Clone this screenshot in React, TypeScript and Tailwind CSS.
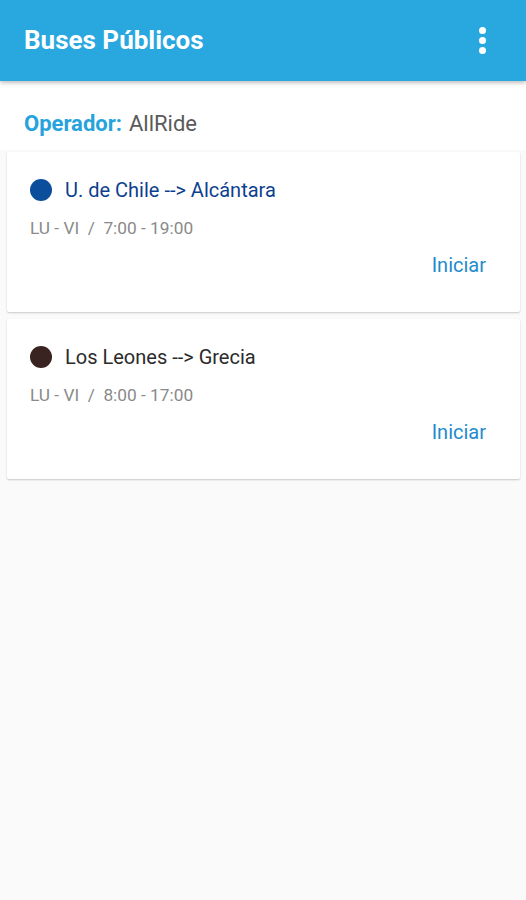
import React from "react";

const routes = [
  { color: "#0b4f9c", name: "U. de Chile --> Alcántara", nameColor: "#0d3f8f", sched: "LU - VI  /  7:00 - 19:00" },
  { color: "#3a2422", name: "Los Leones --> Grecia", nameColor: "#2b2b2b", sched: "LU - VI  /  8:00 - 17:00" },
];

export default function App() {
  return (
    <div className="min-h-[900px] w-[526px] bg-[#fafafa]" style={{ fontFamily: "Roboto, 'Noto Sans', sans-serif" }}>
      <div className="relative z-10 flex h-[81px] items-center justify-between bg-[#29a8e0] pl-6 pr-[40px] shadow-[0_2px_4px_rgba(0,0,0,0.25)]">
        <h1 className="text-[26px] font-bold text-white">Buses Públicos</h1>
        <div className="flex flex-col gap-[3px]">
          <span className="h-[7px] w-[7px] rounded-full bg-white" />
          <span className="h-[7px] w-[7px] rounded-full bg-white" />
          <span className="h-[7px] w-[7px] rounded-full bg-white" />
        </div>
      </div>
      <div className="flex h-[69px] items-center bg-white pl-6 pt-[16px] text-[22px]">
        <span className="font-bold text-[#26a2dc]">Operador:</span>
        <span className="ml-[7px] text-[#5a5a5a]">AllRide</span>
      </div>
      <div className="flex flex-col gap-[7px] pl-[7px] pr-[6px] pt-[2px]">
        {routes.map((r) => (
          <div key={r.name} className="flex h-[160px] flex-col rounded-[2px] bg-white shadow-[0_1px_2px_rgba(0,0,0,0.2)]">
            <div className="mt-[27px] flex items-center pl-[23px]">
              <span className="h-[22px] w-[22px] rounded-full" style={{ backgroundColor: r.color }} />
              <span className="ml-[13px] text-[20px] leading-[22px]" style={{ color: r.nameColor }}>{r.name}</span>
            </div>
            <div className="mt-[17px] whitespace-pre pl-[23px] text-[17.3px] leading-[20px] text-[#8a8a8a]">{r.sched}</div>
            <div className="mt-[16px] flex justify-end pr-[34px]">
              <span className="text-[20px] leading-[22px] text-[#1f8bcc]">Iniciar</span>
            </div>
          </div>
        ))}
      </div>
    </div>
  );
}
